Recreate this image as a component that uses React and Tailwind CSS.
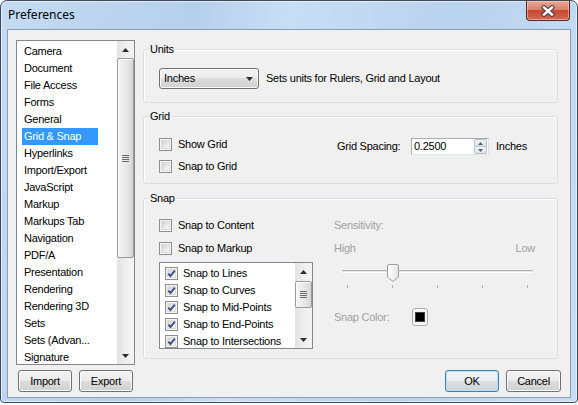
import React from "react";

const items = [
  "Camera", "Document", "File Access", "Forms", "General", "Grid & Snap",
  "Hyperlinks", "Import/Export", "JavaScript", "Markup", "Markups Tab",
  "Navigation", "PDF/A", "Presentation", "Rendering", "Rendering 3D",
  "Sets", "Sets (Advan...", "Signature",
];

const snapItems = [
  "Snap to Lines", "Snap to Curves", "Snap to Mid-Points",
  "Snap to End-Points", "Snap to Intersections",
];

function Arrow({ down }) {
  return (
    <svg width="7" height="4" viewBox="0 0 7 4">
      <path d={down ? "M0 0 H7 L3.5 4 Z" : "M0 4 H7 L3.5 0 Z"} fill="#2e2e2e" />
    </svg>
  );
}

function Scrollbar({ thumbClass }) {
  return (
    <div className="w-[17px] h-full flex flex-col shrink-0 bg-gradient-to-r from-[#e2e2e2] via-[#eeeeee] to-[#f4f4f4]">
      <div className="h-[17px] flex items-center justify-center shrink-0">
        <Arrow />
      </div>
      <div className="flex-1 flex flex-col">
        <div className={"rounded-[2px] border border-[#9a9a9a] bg-gradient-to-r from-[#f5f5f5] via-[#e9e9e9] to-[#d5d5d5] shadow-[inset_1px_1px_0_#ffffff] flex flex-col items-center justify-center gap-[1px] " + thumbClass}>
          <div className="w-[7px] h-[1px] bg-[#6a6a6a]" />
          <div className="w-[7px] h-[1px] bg-[#6a6a6a]" />
          <div className="w-[7px] h-[1px] bg-[#6a6a6a]" />
          <div className="w-[7px] h-[1px] bg-[#6a6a6a]" />
        </div>
      </div>
      <div className="h-[17px] flex items-center justify-center shrink-0">
        <Arrow down />
      </div>
    </div>
  );
}

function Checkbox({ checked }) {
  return (
    <span className="w-[13px] h-[13px] border border-[#8e8f8f] bg-[#f4f4f4] p-[1px] flex shrink-0">
      <span className="flex-1 relative bg-gradient-to-br from-[#cfd0d2] via-[#e6e6e6] to-[#fafafa] border border-[#dcdcdc]">
        {checked && (
          <svg className="absolute -left-[2px] -top-[2px]" width="11" height="11" viewBox="0 0 11 11">
            <path d="M2.3 5.6 L4.5 8 L8.8 2.6" stroke="#3a4f86" strokeWidth="1.9" fill="none" />
          </svg>
        )}
      </span>
    </span>
  );
}

function Group({ label, className, children }) {
  return (
    <div className={"relative border border-[#d5dfe5] rounded-[3px] shadow-[inset_1px_1px_0_#ffffff] mr-[3px] " + className}>
      <span className="absolute -top-[7px] left-[5px] bg-[#f0f0f0] px-[1px] leading-[13px]">{label}</span>
      {children}
    </div>
  );
}

function Btn({ children, def, className }) {
  return (
    <div
      className={
        "h-[22px] rounded-[3px] border flex items-center justify-center " +
        (def
          ? "border-[#3c7fb1] shadow-[inset_0_0_0_1px_#b8e4f7] bg-[linear-gradient(#f2f5f7,#eaeef1_50%,#dbe0e4_50%,#cdd3d8)] "
          : "border-[#707070] shadow-[inset_0_0_0_1px_#fcfcfc] bg-[linear-gradient(#f2f2f2,#ebebeb_50%,#dddddd_50%,#cfcfcf)] ") +
        className
      }
    >
      {children}
    </div>
  );
}

export default function App() {
  return (
    <div className="w-[578px] h-[405px] bg-white">
      <div className="w-[578px] h-[403px] flex flex-col rounded-t-[7px] rounded-b-[4px] border border-[#3e4a58] bg-[linear-gradient(100deg,#c3dbf3,#b6cfeb_30%,#c7def5_45%,#b9d2ed_70%,#c6ddf4)] shadow-[inset_0_0_0_1px_rgba(255,255,255,0.55)] overflow-hidden font-['Liberation_Sans',Arial,sans-serif] text-[11px] tracking-[-0.25px] leading-[13px] text-black">
        {/* title bar */}
        <div className="h-[28px] flex items-start justify-between shrink-0">
          <span className="mt-[6px] ml-[7px] font-['Noto_Sans',sans-serif] text-[12px] tracking-normal leading-[16px] text-black">
            Preferences
          </span>
          <div className="mr-[7px] w-[44px] h-[20px] rounded-b-[4px] border border-t-0 border-[#5a2a22] bg-[linear-gradient(#e9a896,#d9826c_45%,#c7472c_50%,#d36a52)] shadow-[inset_0_0_0_1px_rgba(255,220,210,0.5)] flex items-center justify-center">
            <svg width="14" height="12" viewBox="0 0 14 12">
              <path d="M3 2.5 L11 9.5 M11 2.5 L3 9.5" stroke="#4a3a3a" strokeWidth="4.6" strokeLinecap="square" fill="none" />
              <path d="M3 2.5 L11 9.5 M11 2.5 L3 9.5" stroke="#ffffff" strokeWidth="2.6" strokeLinecap="square" fill="none" />
            </svg>
          </div>
        </div>

        {/* client area */}
        <div className="mx-[6px] h-[369px] border border-[#8b9db2] bg-[#f0f0f0] flex shrink-0">
          {/* left column */}
          <div className="pl-[8px] pt-[10px] flex flex-col">
            <div className="w-[119px] h-[325px] border border-[#828790] bg-white flex">
              <div className="flex-1 pl-[5px] pt-[2px] flex flex-col">
                {items.map((it) => (
                  <div key={it} className="h-[17px] flex items-center shrink-0">
                    <span
                      className={
                        it === "Grid & Snap"
                          ? "bg-[#3399ff] text-white w-[76px] h-[17px] flex items-center px-[2px]"
                          : "px-[2px] whitespace-nowrap"
                      }
                    >
                      {it}
                    </span>
                  </div>
                ))}
              </div>
              <Scrollbar thumbClass="mt-0 h-[200px]" />
            </div>
            <div className="flex gap-[7px] mt-[5px] ml-[2px]">
              <Btn className="w-[54px]">Import</Btn>
              <Btn className="w-[54px]">Export</Btn>
            </div>
          </div>

          {/* right column */}
          <div className="ml-[8px] w-[418px] pt-[19px] flex flex-col">
            <Group label="Units" className="h-[54px]">
              <div className="pt-[18px] pl-[15px] flex items-center gap-[7px]">
                <div className="w-[100px] h-[21px] rounded-[3px] border border-[#707070] shadow-[inset_0_0_0_1px_#fcfcfc] bg-[linear-gradient(#f2f2f2,#ebebeb_50%,#dddddd_50%,#cfcfcf)] flex items-center justify-between pl-[4px] pr-[5px]">
                  <span>Inches</span>
                  <Arrow down />
                </div>
                <span className="whitespace-nowrap">Sets units for Rulers, Grid and Layout</span>
              </div>
            </Group>

            <Group label="Grid" className="h-[68px] mt-[13px]">
              <div className="pt-[21px] flex">
                <div className="w-[193px] pl-[15px] flex flex-col">
                  <div className="h-[13px] flex items-center gap-[6px]">
                    <Checkbox />
                    <span>Show Grid</span>
                  </div>
                  <div className="h-[13px] mt-[9px] flex items-center gap-[6px]">
                    <Checkbox />
                    <span>Snap to Grid</span>
                  </div>
                </div>
                <div className="flex items-center h-[17px]">
                  <span className="w-[74px] whitespace-nowrap">Grid Spacing:</span>
                  <div className="w-[78px] h-[17px] border border-[#abadb3] border-b-[#e3e9ef] border-r-[#dbdfe6] bg-white flex items-center justify-between pl-[2px] pr-[1px]">
                    <span>0.2500</span>
                    <div className="w-[13px] h-[15px] flex flex-col">
                      <div className="flex-1 border border-[#b3bfcc] rounded-t-[2px] bg-gradient-to-b from-[#f6f6f6] to-[#dfe3e8] flex items-center justify-center">
                        <svg width="5" height="3" viewBox="0 0 5 3"><path d="M0 3 H5 L2.5 0 Z" fill="#4b5d77" /></svg>
                      </div>
                      <div className="flex-1 border border-t-0 border-[#b3bfcc] rounded-b-[2px] bg-gradient-to-b from-[#f6f6f6] to-[#dfe3e8] flex items-center justify-center">
                        <svg width="5" height="3" viewBox="0 0 5 3"><path d="M0 0 H5 L2.5 3 Z" fill="#4b5d77" /></svg>
                      </div>
                    </div>
                  </div>
                  <span className="ml-[7px]">Inches</span>
                </div>
              </div>
            </Group>

            <Group label="Snap" className="h-[161px] mt-[14px]">
              <div className="pt-[20px] flex">
                <div className="w-[169px] pl-[15px] flex flex-col">
                  <div className="h-[13px] flex items-center gap-[6px]">
                    <Checkbox />
                    <span>Snap to Content</span>
                  </div>
                  <div className="h-[13px] mt-[10px] flex items-center gap-[6px]">
                    <Checkbox />
                    <span>Snap to Markup</span>
                  </div>
                  <div className="mt-[7px] w-[154px] h-[87px] border border-[#828790] bg-white flex">
                    <div className="flex-1 pl-[5px] pt-[2px] flex flex-col overflow-hidden">
                      {snapItems.map((s) => (
                        <div key={s} className="h-[17px] flex items-center gap-[5px] shrink-0 whitespace-nowrap">
                          <Checkbox checked />
                          <span>{s}</span>
                        </div>
                      ))}
                    </div>
                    <Scrollbar thumbClass="mt-[1px] h-[27px]" />
                  </div>
                </div>

                <div className="ml-[21px] w-[201px] flex flex-col text-[#a0a0a0]">
                  <span className="h-[13px]">Sensitivity:</span>
                  <div className="h-[13px] mt-[10px] flex justify-between">
                    <span>High</span>
                    <span>Low</span>
                  </div>
                  <div className="relative ml-[8px] w-[191px] h-[18px] mt-[9px]">
                    <div className="absolute left-0 right-0 top-[6px] h-[3px] border-t border-[#b4b4b4] border-b border-b-[#ffffff] bg-[#e6e6e6]" />
                    <svg className="absolute left-[45px] top-0" width="12" height="18" viewBox="0 0 12 18">
                      <defs>
                        <linearGradient id="th" x1="0" y1="0" x2="1" y2="0">
                          <stop offset="0" stopColor="#ffffff" />
                          <stop offset="1" stopColor="#e4e4e4" />
                        </linearGradient>
                      </defs>
                      <path d="M2 0.5 H10 Q11.5 0.5 11.5 2 V13 L6 17.5 L0.5 13 V2 Q0.5 0.5 2 0.5 Z" fill="url(#th)" stroke="#9c9c9c" />
                    </svg>
                  </div>
                  <div className="ml-[8px] w-[191px] px-[5px] mt-[3px] flex justify-between">
                    <div className="w-[1px] h-[3px] bg-[#b0b0b0]" />
                    <div className="w-[1px] h-[3px] bg-[#b0b0b0]" />
                    <div className="w-[1px] h-[3px] bg-[#b0b0b0]" />
                    <div className="w-[1px] h-[3px] bg-[#b0b0b0]" />
                    <div className="w-[1px] h-[3px] bg-[#b0b0b0]" />
                  </div>
                  <div className="mt-[20px] h-[18px] flex items-center">
                    <span className="w-[78px]">Snap Color:</span>
                    <div className="w-[16px] h-[18px] rounded-[3px] border border-[#a8a8a8] bg-[#f4f4f4] shadow-[inset_0_0_0_1px_#ffffff] flex items-center justify-center">
                      <div className="w-[10px] h-[10px] bg-black border border-[#404040]" />
                    </div>
                  </div>
                </div>
              </div>
            </Group>

            <div className="mt-[11px] flex justify-end gap-[7px]">
              <Btn def className="w-[54px]">OK</Btn>
              <Btn className="w-[55px]">Cancel</Btn>
            </div>
          </div>
        </div>
      </div>
    </div>
  );
}
